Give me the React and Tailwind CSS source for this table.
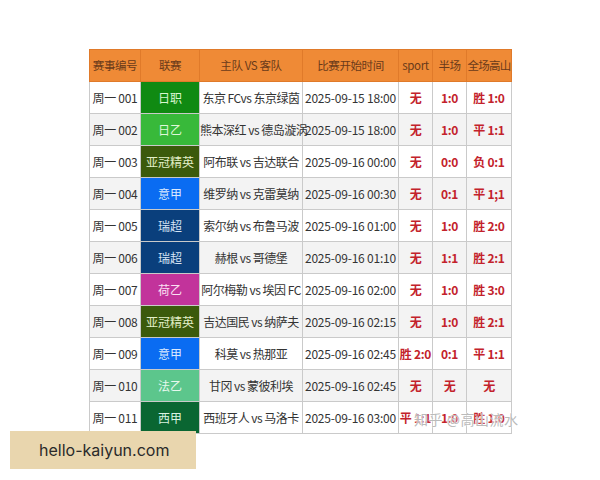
const rows = [
  { no: "周一 001", league: "日职", bg: "bg-[#108a12]", fg: "text-[#d9f5d0]", match: "东京 FCvs 东京绿茵", time: "2025-09-15 18:00", sport: "无", half: "1:0", full: "胜 1:0" },
  { no: "周一 002", league: "日乙", bg: "bg-[#38b93a]", fg: "text-[#dff7d8]", match: "熊本深红 vs 德岛漩涡", time: "2025-09-15 18:00", sport: "无", half: "1:0", full: "平 1:1" },
  { no: "周一 003", league: "亚冠精英", bg: "bg-[#3b5a0c]", fg: "text-[#e3efc8]", match: "阿布联 vs 吉达联合", time: "2025-09-16 00:00", sport: "无", half: "0:0", full: "负 0:1" },
  { no: "周一 004", league: "意甲", bg: "bg-[#0a6cf2]", fg: "text-[#dbe9ff]", match: "维罗纳 vs 克雷莫纳", time: "2025-09-16 00:30", sport: "无", half: "0:1", full: "平 1;1" },
  { no: "周一 005", league: "瑞超", bg: "bg-[#0a3f7c]", fg: "text-[#d6e4f5]", match: "索尔纳 vs 布鲁马波", time: "2025-09-16 01:00", sport: "无", half: "1:0", full: "胜 2:0" },
  { no: "周一 006", league: "瑞超", bg: "bg-[#0a3f7c]", fg: "text-[#d6e4f5]", match: "赫根 vs 哥德堡", time: "2025-09-16 01:10", sport: "无", half: "1:1", full: "胜 2:1" },
  { no: "周一 007", league: "荷乙", bg: "bg-[#c2339b]", fg: "text-[#fbe0f2]", match: "阿尔梅勒 vs 埃因 FC", time: "2025-09-16 02:00", sport: "无", half: "1:0", full: "胜 3:0" },
  { no: "周一 008", league: "亚冠精英", bg: "bg-[#3b5a0c]", fg: "text-[#e3efc8]", match: "吉达国民 vs 纳萨夫", time: "2025-09-16 02:15", sport: "无", half: "1:0", full: "胜 2:1" },
  { no: "周一 009", league: "意甲", bg: "bg-[#0a6cf2]", fg: "text-[#dbe9ff]", match: "科莫 vs 热那亚", time: "2025-09-16 02:45", sport: "胜 2:0", half: "0:1", full: "平 1:1" },
  { no: "周一 010", league: "法乙", bg: "bg-[#5cc68c]", fg: "text-[#e6f8ee]", match: "甘冈 vs 蒙彼利埃", time: "2025-09-16 02:45", sport: "无", half: "无", full: "无" },
  { no: "周一 011", league: "西甲", bg: "bg-[#0a6632]", fg: "text-[#d8f2e0]", match: "西班牙人 vs 马洛卡", time: "2025-09-16 03:00", sport: "平 1:1", half: "1:0", full: "胜 1:0" },
];

const headers = ["赛事编号", "联赛", "主队 VS 客队", "比赛开始时间", "sport", "半场", "全场高山"];
const widths = ["w-[51px]", "w-[59px]", "w-[103px]", "w-[96px]", "w-[34px]", "w-[34px]", "w-[45px]"];

const cell = "overflow-visible border border-[#cacaca] p-0 text-center whitespace-nowrap";
const red = "font-bold text-[#c3222b] tracking-[-0.3px]";

const App = () => {
  return (
    <div className="relative h-[480px] w-[600px] overflow-hidden bg-white font-['Noto_Sans_CJK_SC','Noto_Sans',sans-serif]">
      <div className="pl-[89px] pt-[49px]">
        <table className="w-[423px] table-fixed border-collapse text-[12px] leading-none">
          <thead>
            <tr className="h-[32px] bg-[#ef8a36] text-[11.5px] text-[#6a3a1a]">
              {headers.map((h, i) => (
                <th
                  key={h}
                  className={`${widths[i]} overflow-visible border border-[#e07a2a] p-0 text-center font-normal whitespace-nowrap ${i === 6 ? "tracking-[-0.8px]" : "tracking-[-0.4px]"}`}
                >
                  {h}
                </th>
              ))}
            </tr>
          </thead>
          <tbody>
            {rows.map((r, i) => (
              <tr
                key={r.no}
                className={`h-[32px] text-[#333] ${i % 2 === 0 ? "bg-white" : "bg-[#f3f3f3]"}`}
              >
                <td className={`${cell} tracking-[-0.3px]`}>{r.no}</td>
                <td className={`${cell} ${r.bg} ${r.fg}`}>{r.league}</td>
                <td className={`${cell} tracking-[-0.5px]`}>{r.match}</td>
                <td className={`${cell} tracking-[-0.2px]`}>{r.time}</td>
                <td className={`${cell} ${red}`}>{r.sport}</td>
                <td className={`${cell} ${red}`}>{r.half}</td>
                <td className={`${cell} ${red}`}>{r.full}</td>
              </tr>
            ))}
          </tbody>
        </table>
      </div>

      <div className="pointer-events-none absolute left-[414px] top-[409px] text-[14px] tracking-[0.5px] text-[#a8a8a8]/80 [text-shadow:0_0_2px_#fff,0_0_1px_#fff]">
        知乎 @高山流水
      </div>

      <div className="absolute left-[10px] top-[431px] flex h-[38px] w-[186px] items-center bg-[#e9d6ae] pl-[29px] font-['Inter','Noto_Sans',sans-serif] text-[16px] text-[#2a2a2a]">
        hello-kaiyun.com
      </div>
    </div>
  );
};

export default App;
